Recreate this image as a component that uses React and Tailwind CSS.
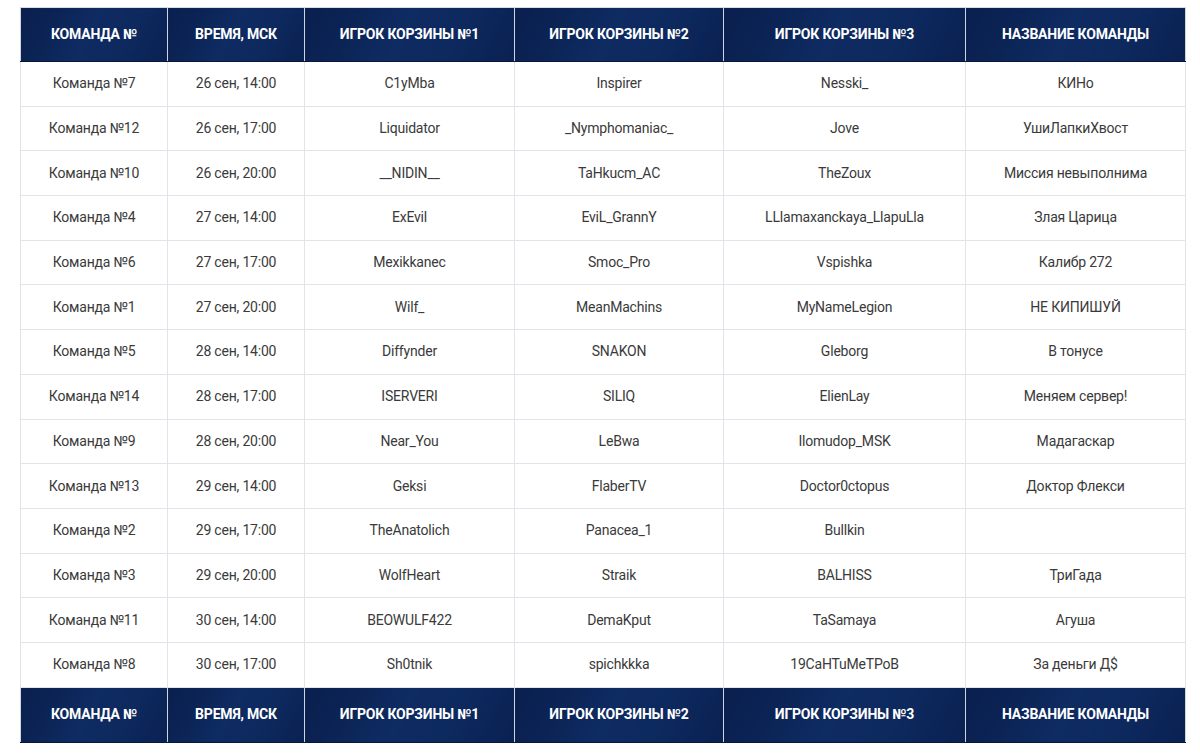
import React from "react";

const COLUMNS = [
  { title: "Команда №", w: "w-[147px]" },
  { title: "Время, МСК", w: "w-[137px]" },
  { title: "Игрок корзины №1", w: "w-[210px]" },
  { title: "Игрок корзины №2", w: "w-[209px]" },
  { title: "Игрок корзины №3", w: "w-[242px]" },
  { title: "Название команды", w: "w-[220px]" },
];

const ROWS = [
  ["Команда №7", "26 сен, 14:00", "C1yMba", "Inspirer", "Nesski_", "КИНо"],
  ["Команда №12", "26 сен, 17:00", "Liquidator", "_Nymphomaniac_", "Jove", "УшиЛапкиХвост"],
  ["Команда №10", "26 сен, 20:00", "__NIDIN__", "TaHkucm_AC", "TheZoux", "Миссия невыполнима"],
  ["Команда №4", "27 сен, 14:00", "ExEvil", "EviL_GrannY", "LLlamaxanckaya_LlapuLla", "Злая Царица"],
  ["Команда №6", "27 сен, 17:00", "Mexikkanec", "Smoc_Pro", "Vspishka", "Калибр 272"],
  ["Команда №1", "27 сен, 20:00", "Wilf_", "MeanMachins", "MyNameLegion", "НЕ КИПИШУЙ"],
  ["Команда №5", "28 сен, 14:00", "Diffynder", "SNAKON", "Gleborg", "В тонусе"],
  ["Команда №14", "28 сен, 17:00", "ISERVERI", "SILIQ", "ElienLay", "Меняем сервер!"],
  ["Команда №9", "28 сен, 20:00", "Near_You", "LeBwa", "Ilomudop_MSK", "Мадагаскар"],
  ["Команда №13", "29 сен, 14:00", "Geksi", "FlaberTV", "Doctor0ctopus", "Доктор Флекси"],
  ["Команда №2", "29 сен, 17:00", "TheAnatolich", "Panacea_1", "Bullkin", ""],
  ["Команда №3", "29 сен, 20:00", "WolfHeart", "Straik", "BALHISS", "ТриГада"],
  ["Команда №11", "30 сен, 14:00", "BEOWULF422", "DemaKput", "TaSamaya", "Агуша"],
  ["Команда №8", "30 сен, 17:00", "Sh0tnik", "spichkkka", "19CaHTuMeTPoB", "За деньги Д$"],
];

function HeadRow({ height }) {
  return (
    <tr className={height}>
      {COLUMNS.map((c) => (
        <th
          key={c.title}
          className="border-x border-[#cfd5df] border-b border-b-[#08183d] bg-[linear-gradient(118deg,#0a1f4e_0%,#0b2455_22%,#0e2b62_45%,#0d295e_70%,#0a2152_100%)] p-0 text-center align-middle text-[14px] font-bold uppercase tracking-[-0.2px] text-white"
        >
          {c.title}
        </th>
      ))}
    </tr>
  );
}

export default function App() {
  return (
    <div className="min-h-screen bg-white pl-[20px] pt-[7px] font-['Roboto',sans-serif]">
      <table className="w-[1165px] table-fixed border-collapse border-t border-[#d8dde5]">
        <colgroup>
          {COLUMNS.map((c) => (
            <col key={c.title} className={c.w} />
          ))}
        </colgroup>
        <thead>
          <HeadRow height="h-[54px]" />
        </thead>
        <tbody>
          {ROWS.map((row, i) => (
            <tr key={i} className="h-[44.7px]">
              {row.map((cell, j) => (
                <td
                  key={j}
                  className="border border-[#e1e4e9] p-0 text-center align-middle text-[14px] tracking-[-0.2px] text-[#3a3a3a]"
                >
                  {cell}
                </td>
              ))}
            </tr>
          ))}
        </tbody>
        <tfoot>
          <HeadRow height="h-[55px]" />
        </tfoot>
      </table>
    </div>
  );
}
